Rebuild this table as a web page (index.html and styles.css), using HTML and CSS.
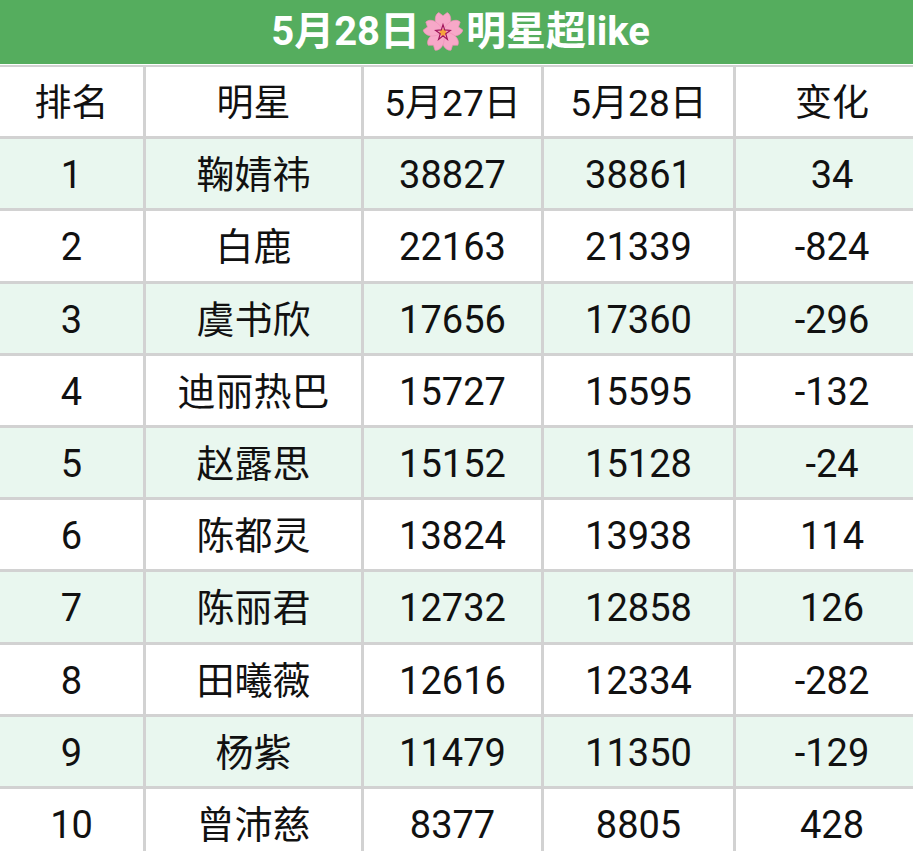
FILE: index.html
```html
<!DOCTYPE html>
<html lang="zh">
<head>
<meta charset="utf-8">
<link rel="stylesheet" href="styles.css">
</head>
<body>
<div class="page">
  <div class="title">
    <span>5月28日</span>
    <svg class="blossom" viewBox="0 0 40 40" width="42" height="42" aria-hidden="true">
      <g fill="#f7a8c8" stroke="#f090b8" stroke-width="0.6">
        <path id="p" d="M20 20 C11 14 11 4 16 1.5 L20 4.5 L24 1.5 C29 4 29 14 20 20 Z"/>
        <use href="#p" transform="rotate(72 20 20)"/>
        <use href="#p" transform="rotate(144 20 20)"/>
        <use href="#p" transform="rotate(216 20 20)"/>
        <use href="#p" transform="rotate(288 20 20)"/>
      </g>
      <circle cx="20" cy="20.5" r="3.2" fill="#f5a23c"/>
      <path d="M20 13 L21.6 18 L27 18.5 L22.6 21.6 L24.2 27 L20 23.6 L15.8 27 L17.4 21.6 L13 18.5 L18.4 18 Z" fill="none" stroke="#a0145a" stroke-width="1.1"/>
    </svg>
    <span>明星超like</span>
  </div>
  <div class="table">
    <div class="row head"><div>排名</div><div>明星</div><div>5月27日</div><div>5月28日</div><div>变化</div></div>
    <div class="row alt"><div>1</div><div>鞠婧祎</div><div>38827</div><div>38861</div><div>34</div></div>
    <div class="row"><div>2</div><div>白鹿</div><div>22163</div><div>21339</div><div>-824</div></div>
    <div class="row alt"><div>3</div><div>虞书欣</div><div>17656</div><div>17360</div><div>-296</div></div>
    <div class="row"><div>4</div><div>迪丽热巴</div><div>15727</div><div>15595</div><div>-132</div></div>
    <div class="row alt"><div>5</div><div>赵露思</div><div>15152</div><div>15128</div><div>-24</div></div>
    <div class="row"><div>6</div><div>陈都灵</div><div>13824</div><div>13938</div><div>114</div></div>
    <div class="row alt"><div>7</div><div>陈丽君</div><div>12732</div><div>12858</div><div>126</div></div>
    <div class="row"><div>8</div><div>田曦薇</div><div>12616</div><div>12334</div><div>-282</div></div>
    <div class="row alt"><div>9</div><div>杨紫</div><div>11479</div><div>11350</div><div>-129</div></div>
    <div class="row"><div>10</div><div>曾沛慈</div><div>8377</div><div>8805</div><div>428</div></div>
  </div>
</div>
</body>
</html>
```

FILE: styles.css
```css
html, body {
  margin: 0;
  padding: 0;
  background: #ffffff;
}
body {
  width: 913px;
  height: 851px;
  overflow: hidden;
  font-family: "Roboto", "Noto Sans CJK SC", sans-serif;
  color: #111111;
}
.page {
  display: flex;
  flex-direction: column;
}
.title {
  height: 64px;
  background: #55ad5e;
  color: #ffffff;
  font-weight: 700;
  font-size: 40px;
  display: flex;
  align-items: center;
  justify-content: center;
  gap: 2px;
  border-bottom: 1px solid #ffffff;
  padding-left: 8px;
}
.title span {
  line-height: 1;
}
.blossom {
  display: block;
}
.table {
  display: flex;
  flex-direction: column;
  gap: 3px;
  background: #d2d2d2;
  border-top: 2px solid #d2d2d2;
}
.row {
  display: grid;
  grid-template-columns: 143px 215px 177px 189px 177px;
  column-gap: 3px;
  height: 69.2px;
}
.row > div {
  background: #ffffff;
  display: flex;
  align-items: center;
  justify-content: center;
  font-size: 38px;
  line-height: 1;
  padding-top: 3px;
  box-sizing: border-box;
}
.row > div:last-child {
  padding-left: 15px;
}
.row.alt > div {
  background: #e9f7ef;
}
.head > div {
  font-size: 37px;
}
```
